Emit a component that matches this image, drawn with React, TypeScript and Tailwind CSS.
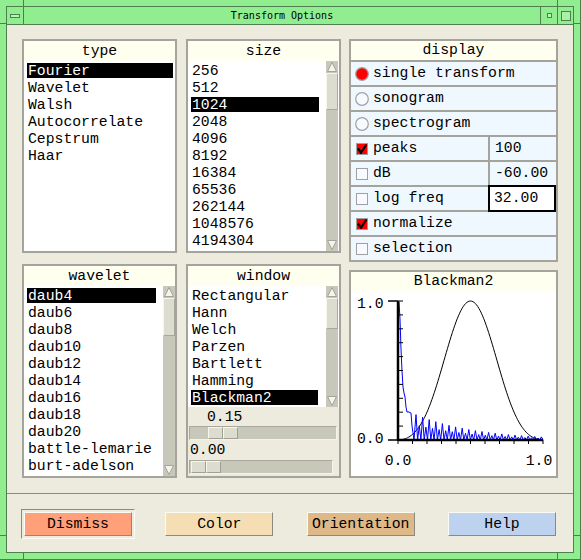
import React from "react";

const FONT = "font-['Liberation_Mono','DejaVu_Sans_Mono',monospace]";

const typeItems = ["Fourier", "Wavelet", "Walsh", "Autocorrelate", "Cepstrum", "Haar"];
const sizeItems = ["256", "512", "1024", "2048", "4096", "8192", "16384", "65536", "262144", "1048576", "4194304"];
const waveletItems = ["daub4", "daub6", "daub8", "daub10", "daub12", "daub14", "daub16", "daub18", "daub20", "battle-lemarie", "burt-adelson"];
const windowItems = ["Rectangular", "Hann", "Welch", "Parzen", "Bartlett", "Hamming", "Blackman2"];

function Arrow({ up }: { up?: boolean }) {
  return (
    <svg width="12" height="12" viewBox="0 0 12 12" className="block shrink-0">
      <polygon
        points={up ? "6,1.5 10.5,10.5 1.5,10.5" : "6,10.5 10.5,1.5 1.5,1.5"}
        fill="#f5f5ee"
        stroke="#a4a49a"
        strokeWidth="1"
      />
    </svg>
  );
}

function Scrollbar({ thumb }: { thumb: string }) {
  return (
    <div className="w-[12px] shrink-0 flex flex-col bg-[#c8c8ba]">
      <Arrow up />
      <div
        className={`${thumb} bg-[#dcdccf] border border-t-[#f6f6ef] border-l-[#f6f6ef] border-b-[#a8a89c] border-r-[#a8a89c]`}
      />
      <div className="flex-1" />
      <Arrow />
    </div>
  );
}

function ListRows({
  items,
  selected,
  className = "",
}: {
  items: string[];
  selected: string;
  className?: string;
}) {
  return (
    <ul className={`flex-1 min-w-0 pt-[1px] ${className}`}>
      {items.map((it) => (
        <li key={it} className="h-[17px] py-[1px]">
          <div
            className={`h-[15px] leading-[16px] pl-[1px] whitespace-nowrap ${
              it === selected ? "bg-black text-white" : ""
            }`}
          >
            {it}
          </div>
        </li>
      ))}
    </ul>
  );
}

function Panel({
  title,
  className = "",
  children,
}: {
  title: string;
  className?: string;
  children: React.ReactNode;
}) {
  return (
    <div className={`flex flex-col border-2 border-[#a4a49c] ${className}`}>
      <div className="h-[20px] leading-[20px] text-center bg-[#fffff0] shrink-0">{title}</div>
      {children}
    </div>
  );
}

function Slider({ spacer, className = "" }: { spacer: string; className?: string }) {
  const seg =
    "w-[15px] h-full bg-[#dcdccf] border border-t-[#f6f6ef] border-l-[#f6f6ef] border-b-[#a0a094] border-r-[#a0a094]";
  return (
    <div
      className={`h-[14px] flex bg-[#c8c8ba] border border-t-[#a8a89c] border-l-[#a8a89c] border-b-[#f4f4ec] border-r-[#f4f4ec] ${className}`}
    >
      <div className={spacer} />
      <div className={seg} />
      <div className={seg} />
    </div>
  );
}

function Radio({ on }: { on?: boolean }) {
  return (
    <svg width="14" height="14" viewBox="0 0 14 14" className="block">
      <circle cx="7" cy="7" r="6.3" fill={on ? "#ff0000" : "#f7fbff"} stroke="#a0a0a0" strokeWidth="1.2" />
    </svg>
  );
}

function Check({ on }: { on?: boolean }) {
  return (
    <svg width="12" height="12" viewBox="0 0 12 12" className="block">
      <rect x="0.5" y="0.5" width="11" height="11" fill={on ? "#ff0000" : "#f7fbff"} stroke="#a0a0a0" />
      {on ? <path d="M2 5.5 L5 9.5 L10.5 1.5" fill="none" stroke="#000" strokeWidth="2.2" /> : null}
    </svg>
  );
}

function DisplayRow({
  icon,
  label,
  value,
  boxed,
}: {
  icon: React.ReactNode;
  label: string;
  value?: string;
  boxed?: boolean;
}) {
  return (
    <div className="h-[25px] border-t-2 border-[#a4a49c] bg-[#f0f8ff] flex">
      <div className={`flex items-center gap-[4px] pl-[4px] ${value ? "w-[137px]" : "flex-1"}`}>
        <div className="w-[14px] flex justify-center">{icon}</div>
        <span className="whitespace-pre">{label}</span>
      </div>
      {value ? (
        boxed ? (
          <div className="relative z-10 -mt-[2px] h-[27px] flex-1 self-start border-2 border-black bg-white pl-[4px] leading-[23px]">
            {value}
          </div>
        ) : (
          <div className="flex-1 border-l-2 border-[#a4a49c] pl-[5px] leading-[23px]">{value}</div>
        )
      ) : null}
    </div>
  );
}

function Graph() {
  const ox = 47;
  const oy = 149;
  const top = 10;
  const right = 192;
  const black: string[] = [];
  for (let i = 0; i <= 120; i++) {
    const t = i / 120;
    const w = 0.42 - 0.5 * Math.cos(2 * Math.PI * t) + 0.08 * Math.cos(4 * Math.PI * t);
    black.push(`${(ox + 145 * t).toFixed(2)},${(oy - 139 * w).toFixed(2)}`);
  }
  const blue: string[] = [
    "47,10", "48,11", "49,28", "50,58", "51,80", "52,96", "53,102", "54,106",
    "55,116", "56,121", "58,121", "60,122", "61,135", "63,149",
  ];
  let k = 0;
  for (let x = 65; x < right - 1; x += 3.3, k++) {
    const amp = 25 * Math.exp(-(x - 66) / 60) * (k % 2 === 0 ? 1 : 0.6);
    blue.push(`${x.toFixed(1)},${(oy - amp).toFixed(1)}`);
    blue.push(`${(x + 1.6).toFixed(1)},${oy}`);
  }
  const yTicks = Array.from({ length: 11 }, (_, i) => top + (i * (oy - top)) / 10);
  const xTicks = Array.from({ length: 11 }, (_, i) => ox + (i * (right - ox)) / 10);
  return (
    <svg width="205" height="185" viewBox="0 0 205 185" className="block">
      <polyline points={black.join(" ")} fill="none" stroke="#000" strokeWidth="1" />
      <polyline points={blue.join(" ")} fill="none" stroke="#0000ff" strokeWidth="1" />
      {yTicks.map((y) => (
        <line key={`y${y}`} x1={ox} x2={ox + 5} y1={y} y2={y} stroke="#000" strokeWidth="1" />
      ))}
      <line x1={ox - 10} x2={ox} y1={top} y2={top} stroke="#000" strokeWidth="1.5" />
      <line x1={ox - 10} x2={ox} y1={oy} y2={oy} stroke="#000" strokeWidth="1.5" />
      {xTicks.map((x) => (
        <line key={`x${x}`} x1={x} x2={x} y1={oy} y2={oy + 4} stroke="#000" strokeWidth="1" />
      ))}
      <line x1={ox} x2={ox} y1={top} y2={oy + 1} stroke="#000" strokeWidth="2.5" />
      <line x1={ox} x2={right} y1={oy} y2={oy} stroke="#000" strokeWidth="2.5" />
      <g fontFamily="'Liberation Mono', monospace" fontSize="14.75" fill="#000">
        <text x="6" y="17">1.0</text>
        <text x="6" y="152">0.0</text>
        <text x="47" y="174" textAnchor="middle">0.0</text>
        <text x="188" y="174" textAnchor="middle">1.0</text>
      </g>
    </svg>
  );
}

function Button({ label, color }: { label: string; color: string }) {
  return (
    <div
      className={`w-[108px] h-[24px] leading-[22px] text-center border border-t-[#fbfbf4] border-l-[#fbfbf4] border-b-[#8a8a82] border-r-[#8a8a82] ${color}`}
    >
      {label}
    </div>
  );
}

export default function App() {
  const line = "absolute bg-[#4f7f4f]";
  return (
    <div
      className={`relative w-[581px] h-[560px] bg-[#90ee90] pt-[6px] pl-[6px] pr-[7px] pb-[7px] text-[14.75px] text-black ${FONT}`}
    >
      {/* frame corner handles */}
      <div className={`${line} left-[23px] top-0 w-px h-[6px]`} />
      <div className={`${line} left-[557px] top-0 w-px h-[6px]`} />
      <div className={`${line} left-0 top-[23px] w-[6px] h-px`} />
      <div className={`${line} right-0 top-[23px] w-[7px] h-px`} />
      <div className={`${line} left-[23px] bottom-0 w-px h-[7px]`} />
      <div className={`${line} left-[557px] bottom-0 w-px h-[7px]`} />
      <div className={`${line} left-0 top-[535px] w-[6px] h-px`} />
      <div className={`${line} right-0 top-[535px] w-[7px] h-px`} />
      <div className={`${line} right-0 top-0 w-px h-full`} />
      <div className={`${line} left-0 bottom-0 h-px w-full`} />

      <div className="h-full flex flex-col border border-[#4f7f4f]">
        {/* title bar */}
        <div className="h-[18px] shrink-0 flex border-b border-[#4f7f4f] bg-[#90ee90]">
          <div className="w-[17px] border-r border-[#4f7f4f] flex items-center justify-center">
            <div className="w-[10px] h-[4px] border border-[#4f7f4f] bg-[#b8f5b8]" />
          </div>
          <div className="flex-1 text-center text-[10px] leading-[17px] font-['DejaVu_Sans_Mono',monospace]">
            Transform Options
          </div>
          <div className="w-[17px] border-l border-[#4f7f4f] flex items-center justify-center">
            <div className="w-[5px] h-[5px] border border-[#4f7f4f] bg-[#b8f5b8]" />
          </div>
          <div className="w-[16px] border-l border-[#4f7f4f] flex items-center justify-center">
            <div className="w-[10px] h-[10px] border border-[#4f7f4f] bg-[#a8f2a8]" />
          </div>
        </div>

        {/* content */}
        <div className="flex-1 bg-[#ecebde] flex flex-col">
          <div className="flex pt-[14px] pl-[15px] pr-[15px]">
            <div className="w-[155px] flex flex-col gap-[11px]">
              <Panel title="type" className="h-[214px] bg-white">
                <ListRows items={typeItems} selected="Fourier" className="pl-[3px] pr-[2px]" />
              </Panel>
              <Panel title="wavelet" className="h-[214px] bg-white">
                <div className="flex flex-1 min-h-0">
                  <ListRows items={waveletItems} selected="daub4" className="pl-[3px] pr-[7px]" />
                  <Scrollbar thumb="h-[38px]" />
                </div>
              </Panel>
            </div>

            <div className="w-[155px] ml-[9px] flex flex-col gap-[11px]">
              <Panel title="size" className="h-[214px] bg-white">
                <div className="flex flex-1 min-h-0 pr-[1px]">
                  <ListRows items={sizeItems} selected="1024" className="pl-[3px] pr-[7px]" />
                  <Scrollbar thumb="h-[37px]" />
                </div>
              </Panel>
              <Panel title="window" className="h-[214px] bg-[#ecebde]">
                <div className="h-[121px] flex bg-white pr-[1px]">
                  <ListRows items={windowItems} selected="Blackman2" className="pl-[3px] pr-[8px]" />
                  <Scrollbar thumb="h-[31px]" />
                </div>
                <div className="pt-[2px] flex flex-col">
                  <div className="h-[17px] leading-[17px] pl-[19px]">0.15</div>
                  <Slider spacer="w-[18px]" className="ml-[1px] mr-[2px]" />
                  <div className="h-[20px] leading-[20px] pl-[2px]">0.00</div>
                  <Slider spacer="w-[1px]" className="ml-[1px] w-[144px]" />
                </div>
              </Panel>
            </div>

            <div className="w-[209px] ml-[8px] flex flex-col gap-[8px]">
              <div className="flex flex-col border-2 border-[#a4a49c]">
                <div className="h-[19px] leading-[19px] text-center bg-[#fffff0]">display</div>
                <DisplayRow icon={<Radio on />} label="single transform" />
                <DisplayRow icon={<Radio />} label="sonogram" />
                <DisplayRow icon={<Radio />} label="spectrogram" />
                <DisplayRow icon={<Check on />} label="peaks" value="100" />
                <DisplayRow icon={<Check />} label="dB" value="-60.00" />
                <DisplayRow icon={<Check />} label="log freq" value="32.00" boxed />
                <DisplayRow icon={<Check on />} label="normalize" />
                <DisplayRow icon={<Check />} label="selection" />
              </div>
              <div className="flex-1 flex flex-col border-2 border-[#a4a49c] bg-white">
                <div className="h-[19px] leading-[19px] text-center bg-[#fffff0]">Blackman2</div>
                <Graph />
              </div>
            </div>
          </div>

          <div className="mt-[15px] border-t border-[#8a8a82]" />

          <div className="flex justify-between px-[17px] pt-[18px]">
            <div className="-m-[3px] p-[2px] border border-t-[#8a8a82] border-l-[#8a8a82] border-b-[#fbfbf4] border-r-[#fbfbf4]">
              <Button label="Dismiss" color="bg-[#ffa07a]" />
            </div>
            <Button label="Color" color="bg-[#f5deb3]" />
            <Button label="Orientation" color="bg-[#deb887]" />
            <Button label="Help" color="bg-[#bcd2ee]" />
          </div>
        </div>
      </div>
    </div>
  );
}
